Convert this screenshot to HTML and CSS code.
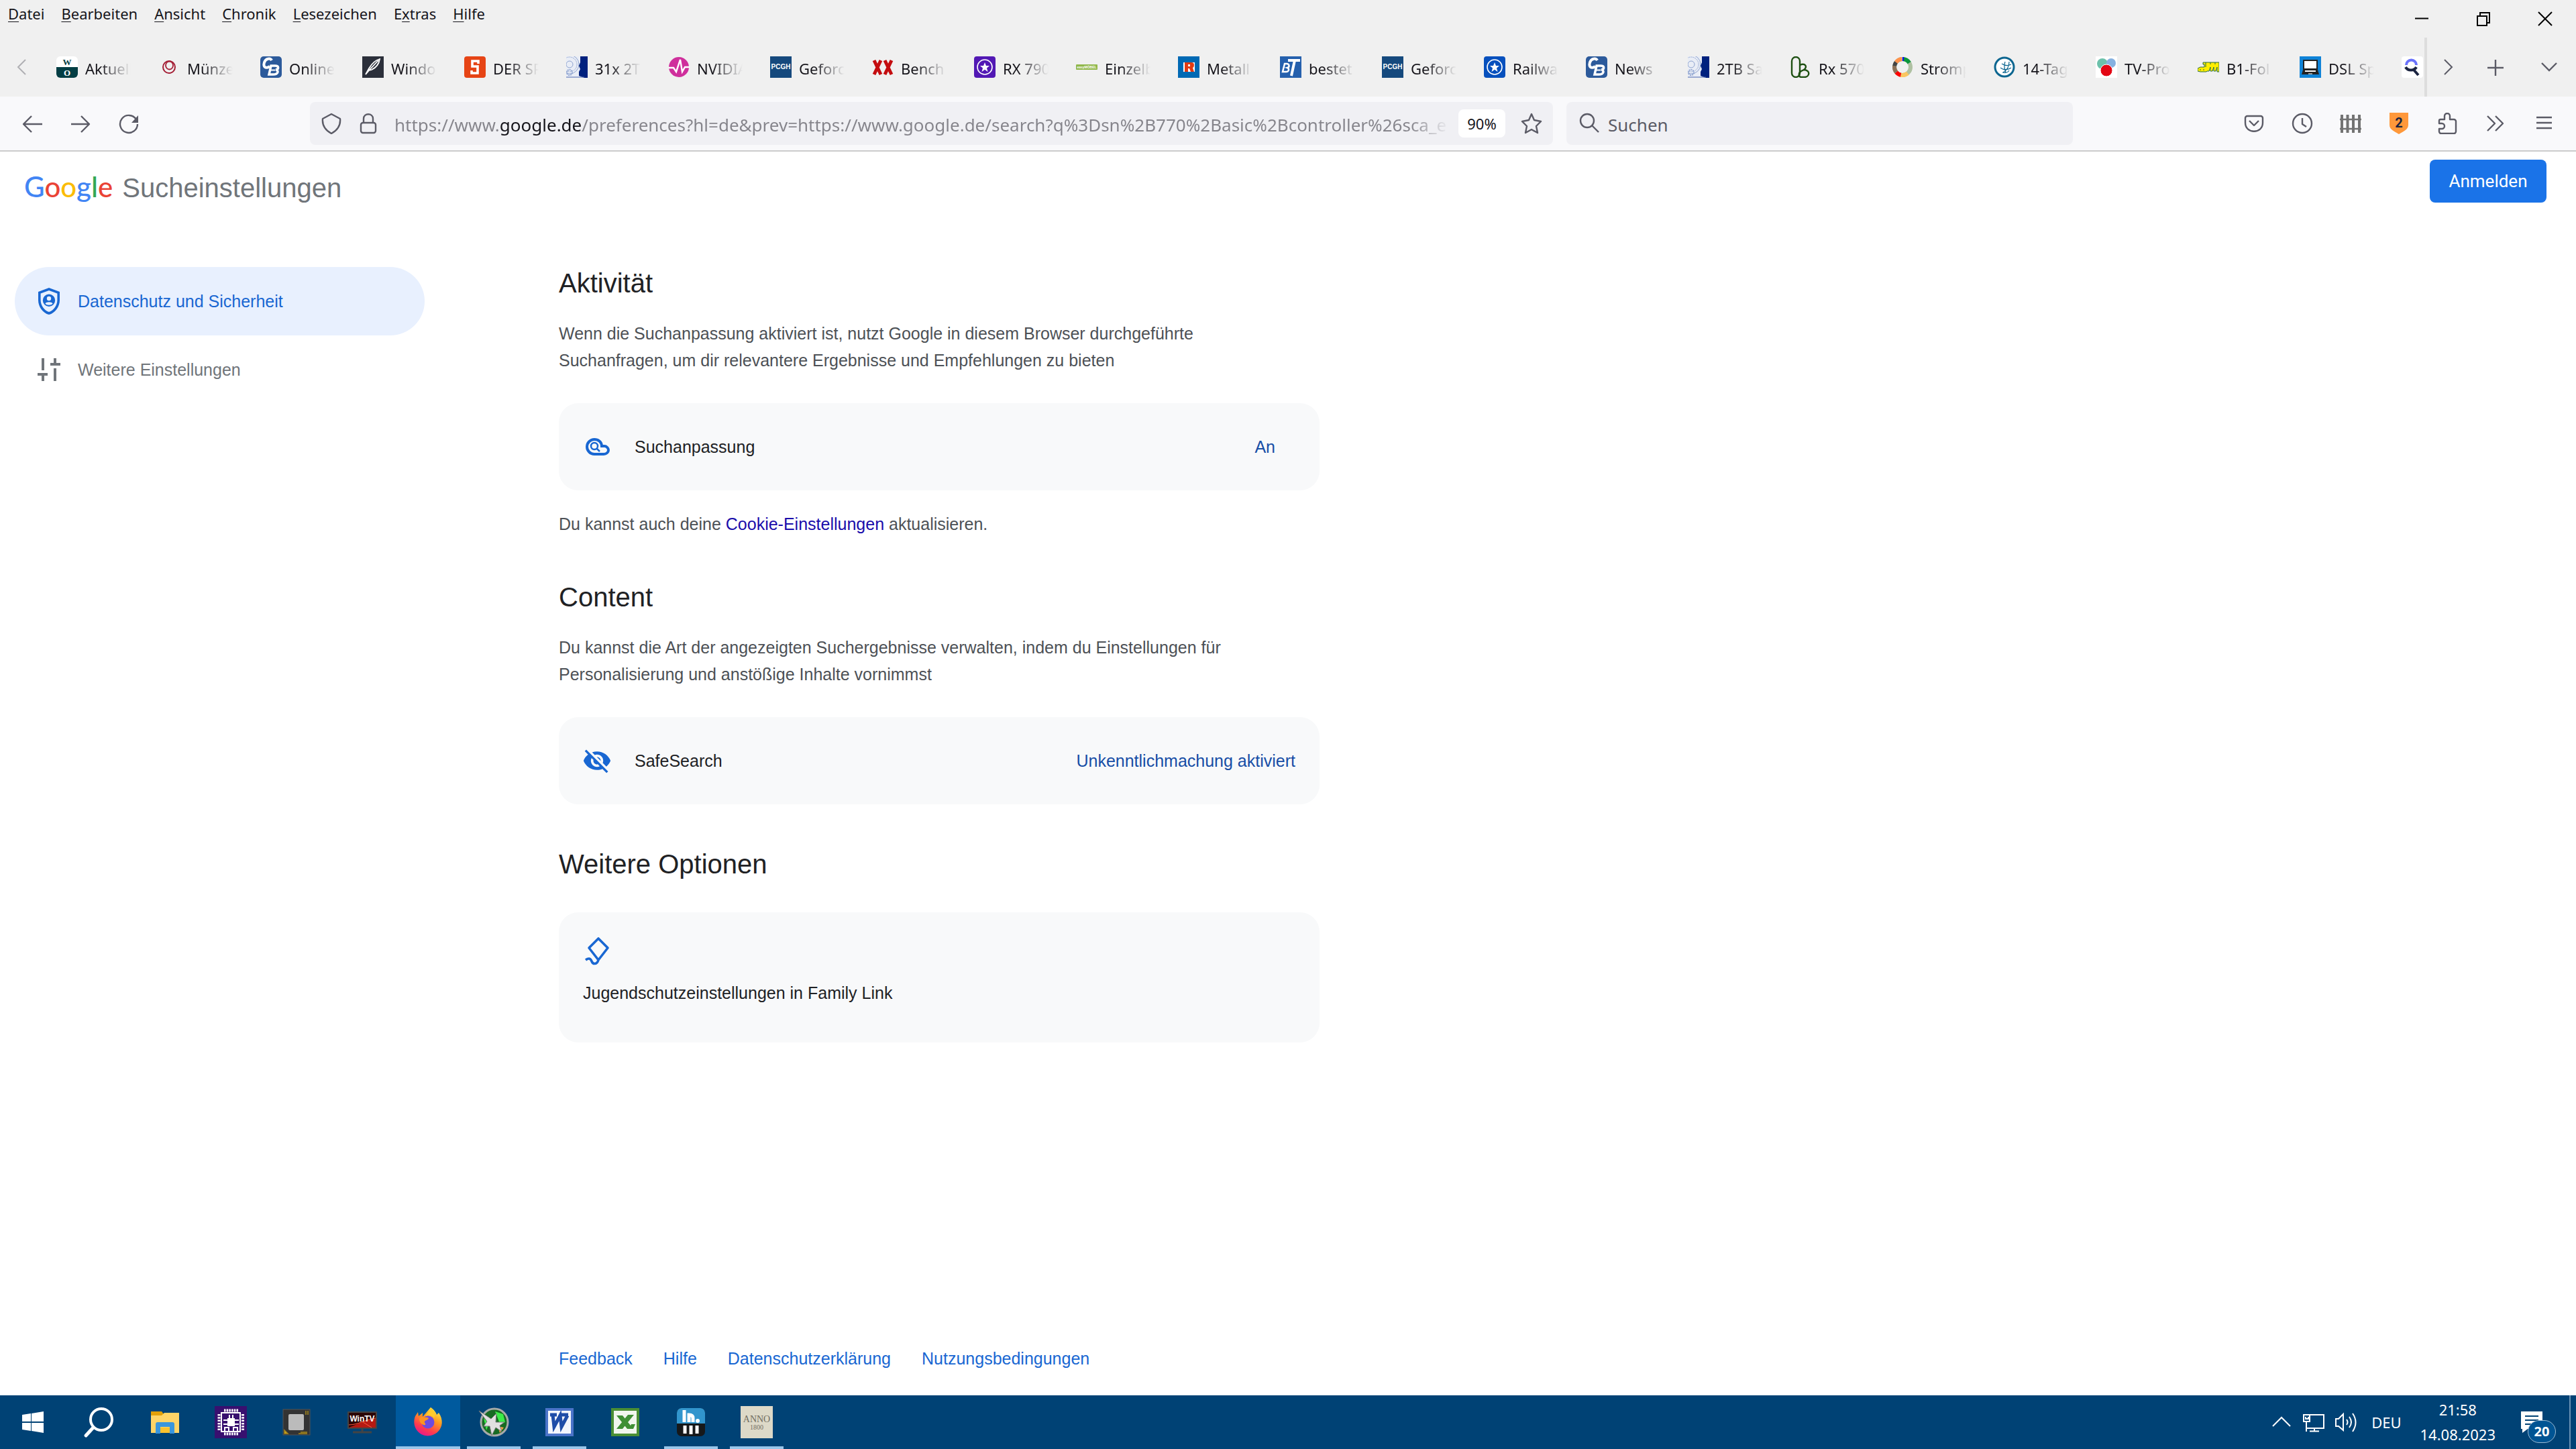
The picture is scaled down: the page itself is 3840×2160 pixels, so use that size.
FILE: index.html
```html
<!DOCTYPE html>
<html lang="de">
<head>
<meta charset="utf-8">
<title>Sucheinstellungen</title>
<link rel="stylesheet" href="styles.css">
</head>
<body>
<header class="chrome">
  <div class="menubar">
    <nav class="menus" aria-label="Menü">
      <button><u>D</u>atei</button><button><u>B</u>earbeiten</button><button><u>A</u>nsicht</button><button><u>C</u>hronik</button><button><u>L</u>esezeichen</button><button>E<u>x</u>tras</button><button><u>H</u>ilfe</button>
    </nav>
    <div class="window-controls">
      <button aria-label="Minimieren"><svg width="32" height="32" viewBox="0 0 32 32"><path d="M6 15.500h20" stroke="#000" stroke-width="2"/></svg></button>
      <button aria-label="Verkleinern"><svg width="32" height="32" viewBox="0 0 32 32"><path d="M7 12h14v14H7zM11 11V7h14v15h-3" fill="none" stroke="#000" stroke-width="2"/></svg></button>
      <button aria-label="Schließen"><svg width="32" height="32" viewBox="0 0 32 32"><path d="M6 6l20 20M26 6L6 26" stroke="#000" stroke-width="2"/></svg></button>
    </div>
  </div>

  <div class="tabstrip">
    <button class="scroll-left" aria-label="Nach links"><svg width="32" height="32" viewBox="0 0 32 32"><path d="M22 5L11 16l11 11" fill="none" stroke="#b0b0b4" stroke-width="2"/></svg></button>
    <div class="tabs">
      <button class="tab"><svg viewBox="0 0 32 32"><rect width="32" height="32" rx="6" fill="#fff"/><path d="M0 16h32v10a6 6 0 0 1-6 6H6a6 6 0 0 1-6-6z" fill="#033e44"/><text x="16" y="13" text-anchor="middle" class="fav-serif" font-size="13" fill="#033e44">W</text><text x="16" y="29" text-anchor="middle" class="fav-serif" font-size="13" fill="#fff">O</text></svg><span>Aktuell</span></button>
      <button class="tab"><svg viewBox="0 0 32 32"><ellipse cx="16" cy="16" rx="9" ry="9" fill="none" stroke="#a41e35" stroke-width="2"/><ellipse cx="16.500" cy="13.500" rx="5.500" ry="6" fill="none" stroke="#a41e35" stroke-width="1.800"/></svg><span>Münze</span></button>
      <button class="tab"><svg viewBox="0 0 32 32"><rect width="32" height="32" rx="5" fill="#2c5a9b"/><path d="M17 6c-2-4-9-3-11 3-2 7 2 10 8 6" fill="none" stroke="#fff" stroke-width="4"/><path d="M16 14l-3 13h6c8 0 9-6 4-7 5-1 5-6-1-6z" fill="none" stroke="#fff" stroke-width="3.500"/><path d="M15 20.500h7" stroke="#fff" stroke-width="2"/></svg><span>Online</span></button>
      <button class="tab"><svg viewBox="0 0 32 32"><rect width="32" height="32" fill="#2b2f3a"/><path d="M5 27l5-9c4-7 9-12 16-14-1 7-6 13-12 16l-4 1zM10 21L24 6" fill="none" stroke="#fff" stroke-width="1.800"/></svg><span>Windo</span></button>
      <button class="tab"><svg viewBox="0 0 32 32"><rect width="32" height="32" rx="4" fill="#e64415"/><path d="M21 11V7h-9v8h8v10h-9v-4" fill="none" stroke="#fff" stroke-width="3.600"/></svg><span>DER SP</span></button>
      <button class="tab"><svg viewBox="0 0 32 32"><rect width="32" height="32" fill="#e9edf6"/><g fill="none" stroke="#8ea3cf"><circle cx="5" cy="12" r="5"/><circle cx="5" cy="12" r="11" stroke-dasharray="2 1"/><circle cx="5" cy="12" r="14"/><circle cx="5" cy="24" r="4" stroke-width="2" stroke-dasharray="2 1"/></g><path d="M21 0h11v32h-5l-8-3v-6l2-4-2-5 2-5z" fill="#00217e"/><path d="M0 31h27" stroke="#4c66ac"/></svg><span>31x 2T</span></button>
      <button class="tab"><svg viewBox="0 0 32 32"><circle cx="16" cy="16" r="15" fill="#cf2f9c"/><path d="M1 17h7l4 6 6-18 3 18 4-7h7" fill="none" stroke="#fff" stroke-width="2.400"/></svg><span>NVIDIA</span></button>
      <button class="tab"><svg viewBox="0 0 32 32"><rect width="32" height="32" fill="#15497d"/><text x="16" y="19" class="fav-text" font-size="10" text-anchor="middle">PCGH</text></svg><span>Geforc</span></button>
      <button class="tab"><svg viewBox="0 0 32 32"><path d="M3 6l10 21M13 6L3 27M19 6l10 21M29 6L19 27" stroke="#c40d10" stroke-width="5"/></svg><span>Bench</span></button>
      <button class="tab"><svg viewBox="0 0 32 32"><rect width="32" height="32" rx="4" fill="#5218b4"/><circle cx="16" cy="16" r="11" fill="none" stroke="#fff" stroke-width="1.600"/><path d="M16 9l2 5h5l-4 3.500 1.500 5.500-4.500-3.300-4.500 3.300 1.500-5.500L9 14h5z" fill="#fff"/></svg><span>RX 790</span></button>
      <button class="tab"><svg viewBox="0 0 32 32"><rect y="12" width="32" height="8" rx="1" fill="#91b84b"/><text x="16" y="18" text-anchor="middle" class="fav-text" font-size="5">easyMÖBEL</text></svg><span>Einzelb</span></button>
      <button class="tab"><svg viewBox="0 0 32 32"><rect width="32" height="32" fill="#0069b4"/><rect x="8" y="9" width="17" height="14" fill="#fff"/><path d="M10 9h10q4 0 4 4 0 3-2 4l2 6h-5l-2-5h-2v5h-5z" fill="#e33a12"/><path d="M15 12h3v3h-3z" fill="#fff"/></svg><span>Metall</span></button>
      <button class="tab"><svg viewBox="0 0 32 32"><rect width="32" height="32" fill="#2560ad"/><path d="M7 11L4 23h5c5 0 5-5 2-6 4-1 3-6-1-6z" fill="none" stroke="#fff" stroke-width="2.500"/><path d="M12 6h18M22 6l-5 23" stroke="#fff" stroke-width="4"/></svg><span>bestet</span></button>
      <button class="tab"><svg viewBox="0 0 32 32"><rect width="32" height="32" fill="#15497d"/><text x="16" y="19" class="fav-text" font-size="10" text-anchor="middle">PCGH</text></svg><span>Geforc</span></button>
      <button class="tab"><svg viewBox="0 0 32 32"><rect width="32" height="32" rx="4" fill="#0750bd"/><circle cx="16" cy="16" r="11" fill="none" stroke="#fff" stroke-width="1.600"/><path d="M16 9l2 5h5l-4 3.500 1.500 5.500-4.500-3.300-4.500 3.300 1.500-5.500L9 14h5z" fill="#fff"/></svg><span>Railwa</span></button>
      <button class="tab"><svg viewBox="0 0 32 32"><rect width="32" height="32" rx="5" fill="#2c5a9b"/><path d="M17 6c-2-4-9-3-11 3-2 7 2 10 8 6" fill="none" stroke="#fff" stroke-width="4"/><path d="M16 14l-3 13h6c8 0 9-6 4-7 5-1 5-6-1-6z" fill="none" stroke="#fff" stroke-width="3.500"/><path d="M15 20.500h7" stroke="#fff" stroke-width="2"/></svg><span>News</span></button>
      <button class="tab"><svg viewBox="0 0 32 32"><rect width="32" height="32" fill="#e9edf6"/><g fill="none" stroke="#8ea3cf"><circle cx="5" cy="12" r="5"/><circle cx="5" cy="12" r="11" stroke-dasharray="2 1"/><circle cx="5" cy="12" r="14"/><circle cx="5" cy="24" r="4" stroke-width="2" stroke-dasharray="2 1"/></g><path d="M21 0h11v32h-5l-8-3v-6l2-4-2-5 2-5z" fill="#00217e"/><path d="M0 31h27" stroke="#4c66ac"/></svg><span>2TB Sa</span></button>
      <button class="tab"><svg viewBox="0 0 32 32"><rect x="3" y="1" width="12" height="30" rx="6" fill="none" stroke="#1e5012" stroke-width="2.400"/><path d="M15 13c8-4 12 3 6 7 11 1 8 11 1 11h-4c-6 0-5-7-1-9l4-2" fill="none" stroke="#1e5012" stroke-width="2.400"/></svg><span>Rx 570</span></button>
      <button class="tab"><svg viewBox="0 0 32 32"><g fill="none" stroke-width="6" transform="rotate(-90 16 16)"><circle cx="16" cy="16" r="12" stroke="#afc1a2"/><circle cx="16" cy="16" r="12" stroke="#0a963c" stroke-dasharray="12 64"/><circle cx="16" cy="16" r="12" stroke="#fbc661" stroke-dasharray="11 65" stroke-dashoffset="-29"/><circle cx="16" cy="16" r="12" stroke="#f00" stroke-dasharray="8 68" stroke-dashoffset="-40"/><circle cx="16" cy="16" r="12" stroke="#8d7158" stroke-dasharray="10 66" stroke-dashoffset="-48"/><circle cx="16" cy="16" r="12" stroke="#444" stroke-dasharray="6 70" stroke-dashoffset="-58"/><circle cx="16" cy="16" r="12" stroke="#ff934c" stroke-dasharray="10 66" stroke-dashoffset="-64"/><circle cx="16" cy="16" r="12" stroke="#10f" stroke-dasharray="2 74"/></g></svg><span>Stromp</span></button>
      <button class="tab"><svg viewBox="0 0 32 32"><circle cx="16" cy="16" r="14" fill="#fff" stroke="#0d6690" stroke-width="3"/><path d="M12 11c6 4 12 2 14 1M10 17c5 4 12 3 16 0M13 24c4 1 8 0 10-3M17 8c-2 5-1 11 1 16M23 8c0 6-2 12-9 16" fill="none" stroke="#0d6690" stroke-width="1.200"/></svg><span>14-Tag</span></button>
      <button class="tab"><svg viewBox="0 0 32 32"><rect width="32" height="32" fill="#fff"/><circle cx="10" cy="11" r="8" fill="#6cc1ab"/><circle cx="23" cy="10" r="7" fill="#86b1e0"/><circle cx="16" cy="21" r="9" fill="#e30613" stroke="#fff"/></svg><span>TV-Pro</span></button>
      <button class="tab"><svg viewBox="0 0 32 32"><path d="M8 9h24v14h-3v-7l-2 6h-3v-6l-2 6h-3v-6l-2 6h-3l-1 1H4l-4-1v-4l4-2h6v-4H8z" fill="#fe0" stroke="#256b43"/><path d="M3 20h2M8 20h2M12 9v7M19 9v3M26 9v3" stroke="#256b43"/></svg><span>B1-Fol</span></button>
      <button class="tab"><svg viewBox="0 0 32 32"><rect width="32" height="32" fill="#0f83d8"/><rect x="6" y="6" width="20" height="13" fill="#fff" stroke="#222" stroke-width="2"/><path d="M5 20h22l2 7H3z" fill="#222"/><path d="M8 22h16" stroke="#fff" stroke-width="2"/><path d="M13 26h6" stroke="#999" stroke-width="2"/></svg><span>DSL Sp</span></button>
      <button class="tab" aria-label="Suche"><svg viewBox="0 0 32 32"><rect width="32" height="32" rx="4" fill="#fff"/><path d="M7 13a7 7 0 0 1 15 0" fill="none" stroke="#6a72fb" stroke-width="4"/><path d="M6 16c3 6 13 6 16 0M18 20l7 8" fill="none" stroke="#1b2440" stroke-width="4"/></svg></button>
    </div>
    <div class="tab-tools">
      <button aria-label="Nach rechts"><svg width="32" height="32" viewBox="0 0 32 32"><path d="M11 5l11 11-11 11" fill="none" stroke="#5b5b66" stroke-width="2"/></svg></button>
      <button aria-label="Neuer Tab"><svg width="32" height="32" viewBox="0 0 32 32"><path d="M4 17h24M16 5v24" stroke="#5b5b66" stroke-width="2.400"/></svg></button>
      <button aria-label="Tabs auflisten"><svg width="32" height="32" viewBox="0 0 32 32"><path d="M5 10l11 11 11-11" fill="none" stroke="#5b5b66" stroke-width="2.400"/></svg></button>
    </div>
  </div>

  <div class="toolbar">
    <div class="tool-group">
      <button aria-label="Zurück"><svg viewBox="0 0 32 32"><path d="M31 17H4M15 5L3 17l12 12"/></svg></button>
      <button aria-label="Vor"><svg viewBox="0 0 32 32"><path d="M2 17h26M17 5l12 12-12 12"/></svg></button>
      <button aria-label="Neu laden"><svg viewBox="0 0 32 32"><path d="M27 10A13 13 0 1 0 29 17"/><path d="M30 4v11H20z" fill="#5b5b66" stroke="none"/></svg></button>
    </div>
    <div class="spacer"></div>
    <div class="field url-field">
      <svg viewBox="0 0 32 32"><path d="M16 2l13 7c1 10-4 17-13 22C7 26 2 19 3 9z"/></svg>
      <svg viewBox="0 0 32 32"><rect x="5" y="15" width="22" height="15" rx="3"/><path d="M9 15V9c0-9 14-9 14 0v6"/></svg>
      <input class="url" type="text" aria-label="Adresse" value="https://www.google.de/preferences?hl=de&amp;prev=https://www.google.de/search?q%3Dsn%2B770%2Basic%2Bcontroller%26sca_e">
      <button class="zoom">90%</button>
      <button aria-label="Lesezeichen setzen"><svg viewBox="0 0 32 32"><path d="M16 2l4 9 10 2-7 7 2 10-9-5-9 5 2-10-7-7 10-2z"/></svg></button>
    </div>
    <div class="field search-field">
      <svg viewBox="0 0 32 32"><circle cx="13" cy="12" r="10"/><path d="M20 19l10 10"/></svg>
      <input class="search" type="text" aria-label="Suchen" placeholder="Suchen">
    </div>
    <div class="spacer"></div>
    <div class="tool-group">
      <button aria-label="Pocket"><svg viewBox="0 0 32 32"><path d="M6 5h20a3 3 0 0 1 3 3v7c0 17-26 17-26 0V8a3 3 0 0 1 3-3zM9 12l7 7 7-7"/></svg></button>
      <button aria-label="Chronik"><svg viewBox="0 0 32 32"><circle cx="16" cy="16" r="14"/><path d="M16 8v9l6 4"/></svg></button>
      <button aria-label="Zaun"><svg viewBox="0 0 32 32"><path d="M3 3v27M11.500 3v27M20 3v27M29 3v27" stroke="#737373" stroke-width="4"/><path d="M0 10h32M0 24h32" stroke="#737373" stroke-width="2.500"/></svg></button>
      <button aria-label="Schutz, 2 blockiert"><svg viewBox="0 0 32 32"><path d="M2 0h28v18c0 7-6 9-14 14C8 27 2 25 2 18z" fill="#ff983a" stroke="none"/><text x="16" y="22" text-anchor="middle" class="shield-count">2</text></svg></button>
      <button aria-label="Erweiterungen"><svg viewBox="0 0 32 32"><path d="M6 10h6V5a4 4 0 0 1 8 0v5h6a3 3 0 0 1 3 3v15a3 3 0 0 1-3 3H7a3 3 0 0 1-3-3v-4h4a4 4 0 0 0 0-8H4v-4a2 2 0 0 1 2-2z"/></svg></button>
      <button aria-label="Mehr Werkzeuge"><svg viewBox="0 0 32 32"><path d="M4 5l11 11L4 27M16 5l11 11-11 11"/></svg></button>
      <button aria-label="Menü öffnen"><svg viewBox="0 0 32 32"><path d="M5 7h23M5 15h23M5 23h23"/></svg></button>
    </div>
  </div>
</header>

<div class="page">
  <header class="page-head">
    <div class="brand"><span class="logo"><span class="b">G</span><span class="r">o</span><span class="y">o</span><span class="b">g</span><span class="g">l</span><span class="r">e</span></span><h1>Sucheinstellungen</h1></div>
    <button class="login">Anmelden</button>
  </header>

  <div class="columns">
    <nav class="side" aria-label="Einstellungen">
      <a class="side-item current" href="#datenschutz"><svg viewBox="0 0 24 24" fill="#1967d2"><path fill-rule="evenodd" d="M12 2L4 5v6.090c0 5.050 3.410 9.760 8 10.910 4.590-1.150 8-5.860 8-10.910V5l-8-3zm6.200 9.090c0 4-2.700 7.700-6.200 8.930-3.500-1.230-6.200-4.930-6.200-8.930V6.200L12 4l6.200 2.200z"/><path fill-rule="evenodd" d="M12 6.800a4.600 4.600 0 1 0 0 9.200 4.600 4.600 0 0 0 0-9.200zm0 1.600a1.600 1.600 0 1 1 0 3.200 1.600 1.600 0 0 1 0-3.200zm-2.800 5.400c.8-1.600 4.800-1.600 5.600 0-1.200 1.500-4.400 1.500-5.600 0z"/></svg>Datenschutz und Sicherheit</a>
      <a class="side-item" href="#weitere"><svg viewBox="0 0 48 48" fill="none" stroke="#70757a" stroke-width="4"><path d="M15 7v18M7 31h15M15 31v10M33 7v9M26 16h15M33 22v19"/></svg>Weitere Einstellungen</a>
    </nav>

    <main class="content">
      <section>
        <h2>Aktivität</h2>
        <p class="lead">Wenn die Suchanpassung aktiviert ist, nutzt Google in diesem Browser durchgeführte Suchanfragen, um dir relevantere Ergebnisse und Empfehlungen zu bieten</p>
        <a class="card row" href="#suchanpassung"><svg viewBox="0 0 44 44" fill="none" stroke="#1967d2" stroke-width="4"><path d="M18 11a11 11 0 1 0 0 22h14c4 0 7-3 7-6s-3-6-6-6h-4c0-6-5-10-11-10z"/><g stroke-width="2.500"><circle cx="18" cy="21" r="5"/><path d="M21 24l5 5"/></g></svg><span>Suchanpassung</span><span class="state short">An</span></a>
        <p class="note">Du kannst auch deine <a href="#cookies">Cookie-Einstellungen</a> aktualisieren.</p>
      </section>
      <section>
        <h2>Content</h2>
        <p class="lead">Du kannst die Art der angezeigten Suchergebnisse verwalten, indem du Einstellungen für Personalisierung und anstößige Inhalte vornimmst</p>
        <a class="card row" href="#safesearch"><svg viewBox="0 0 24 24" fill="#1967d2"><path d="M12 7c2.760 0 5 2.240 5 5 0 .650-.130 1.260-.360 1.830l2.920 2.920c1.510-1.260 2.700-2.890 3.430-4.750-1.730-4.390-6-7.500-11-7.500-1.400 0-2.740.250-3.980.700l2.160 2.160C10.740 7.130 11.350 7 12 7zM2 4.270l2.280 2.280.460.460C3.080 8.300 1.780 10.020 1 12c1.730 4.390 6 7.500 11 7.500 1.550 0 3.030-.300 4.380-.840l.420.420L19.730 22 21 20.730 3.270 3 2 4.270zM7.530 9.800l1.550 1.550c-.050.210-.080.430-.080.650 0 1.660 1.340 3 3 3 .220 0 .440-.030.650-.080l1.550 1.550c-.670.330-1.410.530-2.200.530-2.760 0-5-2.240-5-5 0-.790.200-1.530.530-2.200zm4.310-.780l3.150 3.150.020-.160c0-1.660-1.340-3-3-3l-.170.010z"/></svg><span>SafeSearch</span><span class="state">Unkenntlichmachung aktiviert</span></a>
      </section>
      <section>
        <h2>Weitere Optionen</h2>
        <a class="card stack" href="#familylink"><svg viewBox="0 0 44 44" fill="none" stroke="#1967d2" stroke-width="3.600" stroke-linejoin="round"><path d="M23 4l14 14-14 18L9 18zM23 36c-2 7-8 7-10 2s-5-5-9-2"/></svg><span>Jugendschutzeinstellungen in Family Link</span></a>
      </section>
      <footer class="links">
        <a href="#feedback">Feedback</a><a href="#hilfe">Hilfe</a><a href="#erklaerung">Datenschutzerklärung</a><a href="#nutzung">Nutzungsbedingungen</a>
      </footer>
    </main>
  </div>
</div>

<footer class="taskbar">
  <div class="apps">
    <button aria-label="Start"><svg viewBox="0 0 48 48"><path d="M7 13l13-2v12H7zM21 11l18-3v15H21zM7 25h13v12L7 35zM21 25h18v15l-18-3z" fill="#fff"/></svg></button>
    <button aria-label="Suche"><svg viewBox="0 0 48 48"><ellipse cx="27" cy="20" rx="16" ry="16" fill="none" stroke="#fff" stroke-width="4"/><path d="M15 32L4 44" stroke="#fff" stroke-width="5" stroke-linecap="round"/></svg></button>
    <button aria-label="Explorer"><svg viewBox="0 0 48 48"><path d="M3 8h16l3 4v6H3z" fill="#e3a008"/><path d="M3 14h16l4-4h22v30H3z" fill="#ffd467"/><path d="M10 41V27q0-3 3-3h22q3 0 3 3v14h-7V31H17v10z" fill="#3a96dd"/><path d="M17 32h14v8H17z" fill="#fbc22e"/></svg></button>
    <button aria-label="CPU-Z"><svg viewBox="0 0 48 48"><rect width="48" height="48" fill="#38106f"/><rect x="10" y="10" width="28" height="28" fill="none" stroke="#fff" stroke-width="2"/><rect x="19" y="18" width="11" height="12" fill="#fff"/><path d="M14 6.500h21M14 41.500h21" stroke="#fff" stroke-width="4" stroke-dasharray="2.500 1.200"/><path d="M6.500 12v24M42 12v24" stroke="#fff" stroke-width="4" stroke-dasharray="2.500 1.800"/><path d="M13 21h6M13 27h6M30 21h6M30 27h6M22 18v-5M27 18v-5M15 37v-5h6v5M28 37v-5h6v5" fill="none" stroke="#fff" stroke-width="2"/></svg></button>
    <button aria-label="Prozessor"><svg viewBox="0 0 48 48"><rect x="4" y="5" width="40" height="38" fill="#333" stroke="#555"/><rect x="12" y="12" width="23" height="24" rx="2" fill="#bbb"/><path d="M6 36v5h5zM27 41h13M30 39h10M38 7v6M41 7v6" stroke="#a8891b" stroke-width="1.500" fill="#d6ac20"/></svg></button>
    <button aria-label="WinTV"><svg viewBox="0 0 48 48"><rect x="2" y="8" width="44" height="26" rx="1" fill="#444"/><rect x="4" y="10" width="40" height="22" fill="#2b0505"/><path d="M4 32c12-4 22-12 40-13v13z" fill="#b51a12"/><path d="M4 28c14 0 24-8 40-10M22 22l16 10" stroke="#ff5a3b" fill="none"/><path d="M24 34v4M10 39h28" stroke="#444" stroke-width="3"/><text x="24" y="23" text-anchor="middle" class="fav-text" font-size="12">WinTV</text></svg></button>
    <button class="active" aria-label="Firefox"><svg viewBox="0 0 48 48"><defs><linearGradient id="ff" x1=".8" y1="0" x2=".3" y2="1"><stop offset="0" stop-color="#fff44f"/><stop offset=".4" stop-color="#ff9a1f"/><stop offset=".75" stop-color="#ff3b4e"/><stop offset="1" stop-color="#e5168e"/></linearGradient></defs><path d="M28 2c6 4 8 8 9 11l3-3c7 10 6 21-1 28-8 8-22 9-30 0C3 32 2 22 5 15l4-6 1 6 6-5v6z" fill="url(#ff)"/><circle cx="24" cy="24" r="9.500" fill="#6d4be0"/><path d="M14 16c5 1 9 0 11 2-1 3-5 3-6 5-1 2 2 3 1 5-5 1-9-4-9-9z" fill="#ff9421"/><path d="M20 15c4-2 10-2 13 3 4-6-2-13-5-16-1 6-5 9-8 13z" fill="#ffcb2d"/></svg></button>
    <button class="open" aria-label="Afterburner"><svg viewBox="0 0 48 48"><circle cx="25" cy="24" r="20" fill="#176b23" stroke="#a7aaa9" stroke-width="3"/><path d="M26 8l12 4 3 12-8 2zM9 18l8 8-4 10z" fill="#3bed48"/><path d="M30 30l9 2-6 8z" fill="#f5a24a"/><path d="M2 7l18 12 8-8-1 13 13 0-7 5 3 9-9-6-6 12-3-14-9 0 5-7z" fill="#e0e0e0" stroke="#777"/></svg></button>
    <button class="open" aria-label="Word"><svg viewBox="0 0 48 48"><rect x="5" y="5" width="38" height="38" fill="#f3f6fc" stroke="#4b74c9" stroke-width="4"/><path d="M10 13h10M24 13h13M14 13l2 18 9-17 2 17 9-17" fill="none" stroke="#1e4da8" stroke-width="5"/></svg></button>
    <button aria-label="Excel"><svg viewBox="0 0 48 48"><rect x="5" y="5" width="38" height="38" fill="#f1f6ee" stroke="#4b8f35" stroke-width="4"/><path d="M11 14h9l16 20h-9zM28 13h9L20 34h-9zM33 27h6l-3 7h-6z" fill="#3f8f35"/></svg></button>
    <button class="open" aria-label="HWiNFO"><svg viewBox="0 0 48 48"><rect x="3" y="3" width="42" height="42" rx="7" fill="#16181a"/><path d="M3 26V10a7 7 0 0 1 7-7h28a7 7 0 0 1 7 7v16z" fill="#3195cd"/><path d="M14 6v18M21 24V13q6 0 6 5v6M15 29v12M24 29v13M33 29v12" fill="none" stroke="#fff" stroke-width="5"/><circle cx="34" cy="22" r="3" fill="#fff"/></svg></button>
    <button class="open" aria-label="Anno 1800"><svg viewBox="0 0 48 48"><rect width="48" height="48" fill="#ddd9c8"/><text x="24" y="24" text-anchor="middle" class="fav-anno" font-size="14">ANNO</text><text x="24" y="35" text-anchor="middle" class="fav-anno" font-size="10">1800</text></svg></button>
  </div>
  <div class="tray">
    <svg width="32" height="32" viewBox="0 0 32 32" fill="none" stroke="#fff" stroke-width="2"><path d="M3 22L16 9l13 13"/></svg>
    <svg class="network" width="32" height="32" viewBox="0 0 32 32" fill="none" stroke="#fff" stroke-width="2"><path d="M9 5h22v20H6M1 5h9v10H1zM4 8v3h4V8M5 15v15M17 25v4M10 29.500h14"/></svg>
    <svg class="speaker" width="32" height="32" viewBox="0 0 32 32" fill="none" stroke="#fff" stroke-width="2"><path d="M1 11h4l7-7v24l-7-6H1zM17 12q3 4 0 8M21 8q6 8 0 16M26 3q9 13 0 27"/></svg>
    <span class="lang">DEU</span>
    <time class="clock"><span>21:58</span><span>14.08.2023</span></time>
    <button class="notes" aria-label="Mitteilungen"><svg width="32" height="32" viewBox="0 0 32 32"><path d="M0 0h32v26H10l-8 6v-6H0z" fill="#fff"/><path d="M6 7h20M6 13h20M6 19h14" stroke="#004275" stroke-width="2"/></svg><span class="badge">20</span></button>
    <span class="peek"></span>
  </div>
</footer>
</body>
</html>
```
FILE: styles.css
```css
* { box-sizing: border-box; }
body {
  margin: 0;
  min-height: 100vh;
  display: flex;
  flex-direction: column;
  background: #fff;
  font: 25px/40px "Liberation Sans", Arial, sans-serif;
  color: #202124;
}
button {
  border: 0;
  padding: 0;
  background: none;
  font: inherit;
  color: inherit;
}
a { text-decoration: none; color: inherit; }
svg { flex: none; display: block; }
h1, h2, p { margin: 0; font-weight: 400; }
.fav-text { font-family: "Liberation Sans", Arial, sans-serif; font-weight: 700; fill: #fff; stroke: none; }
.fav-serif { font-family: "Liberation Serif", serif; font-weight: 700; }
.fav-anno { font-family: "Liberation Serif", serif; fill: #716c60; }
.shield-count { font: 700 20px Roboto, sans-serif; fill: #1b2440; stroke: none; }

/* Browser window */
.chrome {
  background: #f0f0f0;
  font: 22px/40px "Noto Sans", "Open Sans", sans-serif;
  color: #15141a;
}
.menubar { display: flex; justify-content: space-between; height: 56px; }
.menus { display: flex; align-items: flex-start; gap: 25px; padding-left: 12px; }
.menus u { text-decoration-thickness: 1px; text-underline-offset: 3px; }
.window-controls { display: flex; }
.window-controls button { width: 92px; display: grid; place-items: center; }

.tabstrip { display: flex; height: 88px; }
.scroll-left { width: 68px; display: grid; place-items: center start; padding-left: 16px; }
.tabs { flex: 1; min-width: 0; display: flex; overflow: hidden; }
.tab {
  flex: none;
  width: 152px;
  display: flex;
  align-items: center;
  gap: 11px;
  padding: 0 8px 0 16px;
  text-align: left;
}
.tab svg { width: 32px; height: 32px; }
.tab span {
  width: 68px;
  padding-top: 4px;
  overflow: hidden;
  white-space: nowrap;
  -webkit-mask-image: linear-gradient(to right, #000 22px, transparent 68px);
  mask-image: linear-gradient(to right, #000 22px, transparent 68px);
}
.tab-tools {
  display: grid;
  grid-template-columns: 62px 80px 80px;
  border-left: 4px solid #ddd;
}
.tab-tools button { display: grid; place-items: center; }

.toolbar {
  display: flex;
  align-items: center;
  height: 82px;
  padding: 0 12px;
  background: #f9f9fb;
  border-bottom: 2px solid #ccc;
}
.toolbar svg {
  width: 32px;
  height: 32px;
  fill: none;
  stroke: #5b5b66;
  stroke-width: 2.400;
  stroke-linejoin: round;
}
.tool-group { display: flex; }
.tool-group button { width: 72px; height: 64px; display: grid; place-items: center; }
.spacer { width: 234px; }
.field {
  display: flex;
  align-items: center;
  height: 64px;
  min-width: 0;
  background: #f0f0f4;
  border-radius: 8px;
}
.field input {
  flex: 1;
  min-width: 0;
  height: 64px;
  border: 0;
  padding: 4px 0 0;
  background: none;
  font-family: inherit;
  font-size: 26px;
  color: #15141a;
}
.url-field { flex: 1821 1 0; gap: 23px; padding: 0 16px; }
.field .url {
  margin-right: -10px;
  background: linear-gradient(to right, #85848b 158px, #15141a 158px, #15141a 280px, #85848b 280px, #85848b calc(100% - 60px), transparent) text;
  -webkit-text-fill-color: transparent;
}
.zoom { width: 70px; height: 42px; border-radius: 8px; background: #fff; line-height: 42px; }
.search-field { flex: 719 1 0; gap: 12px; margin-left: 20px; padding: 0 18px; }
.search::placeholder { color: #5b5b66; opacity: 1; }

/* Settings page */
.page { flex: 1; display: flex; flex-direction: column; }
.page-head {
  display: flex;
  justify-content: space-between;
  align-items: flex-start;
  padding: 12px 44px 0 36px;
}
.brand { display: flex; align-items: baseline; gap: 14px; padding-top: 16px; line-height: 48px; }
.brand h1 { font-size: 40px; color: #70757a; }
.logo { font-family: Lato, sans-serif; font-size: 42px; font-weight: 500; }
.b { color: #4285f4; }
.r { color: #ea4335; }
.y { color: #fbbc05; }
.g { color: #34a853; }
.login {
  width: 174px;
  height: 64px;
  border-radius: 8px;
  background: #1a73e8;
  color: #fff;
  font-family: Roboto, sans-serif;
  font-size: 26px;
}
.columns { flex: 1; display: flex; gap: 200px; padding: 94px 22px 0; }
.side { width: 611px; }
.side-item {
  display: flex;
  align-items: center;
  gap: 19px;
  height: 102px;
  padding-left: 27px;
  border-radius: 51px;
  color: #70757a;
}
.side-item svg { width: 48px; height: 48px; }
.side-item.current { background: #e8f0fe; color: #1967d2; }
.content { flex: 1; display: flex; flex-direction: column; max-width: 1134px; }
section { margin-bottom: 65px; }
h2 { font-size: 40px; line-height: 48px; }
.lead { max-width: 1040px; margin-top: 31px; color: #4d5156; }
.card { display: flex; margin-top: 44px; border-radius: 29px; background: #f8f9fa; }
.row { align-items: center; gap: 34px; height: 130px; padding: 0 36px 0 35px; }
.card svg { width: 44px; height: 44px; }
.state { margin-left: auto; color: #174ea6; }
.short { padding-right: 30px; }
.note { margin-top: 30px; color: #4d5156; }
.note a { color: #1a0dab; }
.stack { flex-direction: column; gap: 21px; margin-top: 48px; padding: 35px 36px 54px; }
.links {
  display: flex;
  gap: 46px;
  margin-top: auto;
  padding-bottom: 35px;
  color: #1967d2;
}

/* Windows taskbar */
.taskbar {
  display: flex;
  justify-content: space-between;
  height: 80px;
  background: #004275;
  color: #fff;
  font: 22px/37px "Noto Sans", "Open Sans", sans-serif;
}
.apps { display: flex; gap: 2px; padding-left: 2px; }
.apps button { position: relative; width: 96px; display: grid; place-items: center; }
.apps svg { width: 48px; height: 48px; }
.apps .active { background: #005a9e; }
.apps .active::after, .apps .open::after {
  content: "";
  position: absolute;
  left: 8px;
  right: 8px;
  bottom: 0;
  height: 4px;
  background: #98c6ea;
}
.apps .active::after { left: 0; right: 0; }
.tray { display: flex; align-items: center; padding-right: 8px; }
.network, .speaker { margin-left: 16px; }
.lang { margin-left: 22px; }
.clock { display: flex; flex-direction: column; align-items: center; margin: 0 38px 0 28px; }
.notes { position: relative; width: 52px; height: 32px; }
.badge {
  position: absolute;
  left: 10px;
  top: 13px;
  width: 42px;
  height: 34px;
  border: 1px solid #9dbbd3;
  border-radius: 17px;
  background: #005493;
  font-size: 20px;
  font-weight: 700;
  line-height: 32px;
}
.peek { align-self: stretch; width: 2px; margin-left: 20px; background: #6b93b5; }
```
